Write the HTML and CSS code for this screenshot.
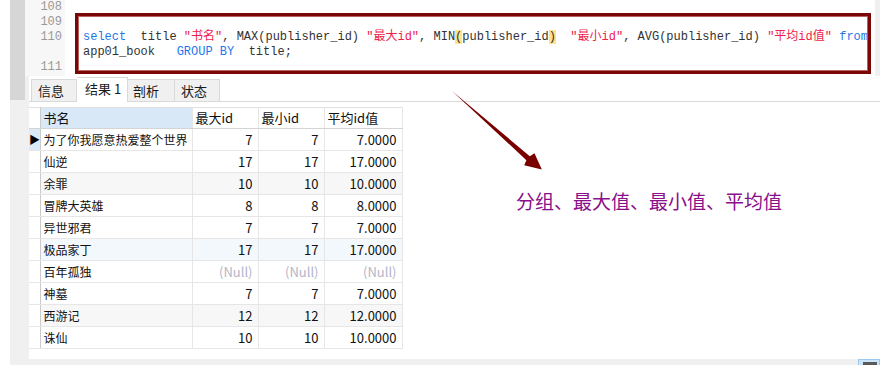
FILE: index.html
```html
<!DOCTYPE html>
<html lang="zh-CN">
<head>
  <meta charset="UTF-8" />
  <title>分组查询</title>
  <link rel="stylesheet" href="styles.css">
</head>
<body>
  <div class="window">
    <div class="top">
      <div class="rail"><div class="rail-grip"></div></div>
      <div class="main">
        <div class="editor">
          <div class="gutter">
            <div class="num">108</div>
            <div class="num">109</div>
            <div class="num tall">110</div>
            <div class="num">111</div>
          </div>
          <div class="code">
            <div class="line"></div>
            <div class="line"></div>
            <div class="line"><span class="kw">select</span>  title <span class="str">"书名"</span>, MAX(publisher_id) <span class="str">"最大id"</span>, MIN<span class="match">(</span>publisher_id<span class="match">)</span>  <span class="str">"最小id"</span>, AVG(publisher_id) <span class="str">"平均id值"</span> <span class="kw">from</span></div>
            <div class="line">app01_book   <span class="kw">GROUP BY</span>  title;</div>
            <div class="line"></div>
          </div>
          <div class="vscroll"></div>
        </div>

        <div class="results">
          <div class="tabs">
            <div class="tab t1">信息</div>
            <div class="tab t2 active">结果 1</div>
            <div class="tab t3">剖析</div>
            <div class="tab t4">状态</div>
          </div>

          <table class="grid">
            <colgroup>
              <col class="c-ind"><col class="c-name"><col class="c-num"><col class="c-num"><col class="c-avg">
            </colgroup>
            <thead>
              <tr>
                <th class="ind"></th>
                <th class="sel">书名</th>
                <th>最大id</th>
                <th>最小id</th>
                <th>平均id值</th>
              </tr>
            </thead>
            <tbody>
              <tr class="current"><td class="ind">▶</td><td class="name">为了你我愿意热爱整个世界</td><td class="n">7</td><td class="n">7</td><td class="n">7.0000</td></tr>
              <tr><td class="ind"></td><td class="name">仙逆</td><td class="n">17</td><td class="n">17</td><td class="n">17.0000</td></tr>
              <tr class="alt"><td class="ind"></td><td class="name">余罪</td><td class="n">10</td><td class="n">10</td><td class="n">10.0000</td></tr>
              <tr><td class="ind"></td><td class="name">冒牌大英雄</td><td class="n">8</td><td class="n">8</td><td class="n">8.0000</td></tr>
              <tr><td class="ind"></td><td class="name">异世邪君</td><td class="n">7</td><td class="n">7</td><td class="n">7.0000</td></tr>
              <tr class="hover"><td class="ind"></td><td class="name">极品家丁</td><td class="n">17</td><td class="n">17</td><td class="n">17.0000</td></tr>
              <tr><td class="ind"></td><td class="name">百年孤独</td><td class="n null">(Null)</td><td class="n null">(Null)</td><td class="n null">(Null)</td></tr>
              <tr><td class="ind"></td><td class="name">神墓</td><td class="n">7</td><td class="n">7</td><td class="n">7.0000</td></tr>
              <tr class="alt"><td class="ind"></td><td class="name">西游记</td><td class="n">12</td><td class="n">12</td><td class="n">12.0000</td></tr>
              <tr><td class="ind"></td><td class="name">诛仙</td><td class="n">10</td><td class="n">10</td><td class="n">10.0000</td></tr>
            </tbody>
          </table>
        </div>
      </div>
    </div>

    <div class="status">
      <span class="status-btn"><i></i></span>
    </div>

    <!-- annotations drawn over the screenshot -->
    <div class="note-box"></div>
    <svg class="arrow" width="880" height="365" viewBox="0 0 880 365">
      <polygon points="452,91 529.8,156.2 534.5,153.2 541.8,169.5 524.2,165.2 526.4,160.2" fill="#7a0000" />
    </svg>
    <div class="note">分组、最大值、最小值、平均值</div>
  </div>
</body>
</html>
```

FILE: styles.css
```css
body {
  margin: 0;
  background: #ffffff;
  font-family: "Noto Sans CJK SC", "Noto Sans", sans-serif;
}
.window {
  position: relative;
  width: 880px;
  height: 365px;
  overflow: hidden;
  display: flex;
  flex-direction: column;
}
.top {
  display: flex;
  height: 359px;
  padding-left: 10px;
}
.rail {
  width: 15px;
  background: #f0f0f0;
}
.rail-grip {
  height: 100px;
  background: #d6d6d6;
}
.main {
  flex: 1;
  display: flex;
  flex-direction: column;
}

/* editor */
.editor {
  display: flex;
  height: 76px;
  background: #ffffff;
}
.gutter {
  width: 40px;
  box-sizing: border-box;
  padding-right: 3px;
  background: #f7f7f7;
  color: #999999;
  font-family: "Liberation Mono", monospace;
  font-size: 12px;
  text-align: right;
}
.num {
  height: 15px;
  line-height: 15px;
}
.num.tall {
  height: 30px;
}
.code {
  flex: 1;
  padding-left: 18px;
  color: #333333;
  font-family: "Liberation Mono", "Noto Sans CJK SC", monospace;
  font-size: 12px;
}
.line {
  height: 15px;
  line-height: 15px;
  white-space: pre;
}
.kw {
  color: #1f78e8;
}
.str {
  color: #f0204c;
}
.match {
  background: #ffe28a;
}
.vscroll {
  width: 5px;
  background: #f0f0f0;
}

/* result pane */
.results {
  flex: 1;
  background: #ffffff;
  border-left: 4px solid #f0f0f0;
}
.tabs {
  height: 26px;
  box-sizing: border-box;
  display: flex;
  align-items: flex-end;
  padding-left: 2px;
  border-bottom: 1px solid #d9d9d9;
}
.tab {
  height: 22px;
  box-sizing: border-box;
  padding-left: 6px;
  border: 1px solid #d9d9d9;
  border-bottom: none;
  border-left: none;
  background: #f0f0f0;
  color: #1a1a1a;
  font-size: 13px;
  line-height: 21px;
}
.tab.t1 {
  width: 46px;
  border-left: 1px solid #d9d9d9;
}
.tab.t2 {
  width: 51px;
  padding-left: 8px;
}
.tab.t3 {
  width: 47px;
  padding-left: 5px;
}
.tab.t4 {
  width: 45px;
  padding-left: 6px;
}
.tab.active {
  height: 25px;
  margin-bottom: -1px;
  background: #ffffff;
  line-height: 22px;
}

.grid {
  margin-top: 5px;
  border-collapse: collapse;
  table-layout: fixed;
  width: 373px;
  font-size: 12px;
  color: #111111;
}
.c-ind { width: 11px; }
.c-name { width: 152px; }
.c-num { width: 66px; }
.c-avg { width: 78px; }
.grid th,
.grid td {
  padding: 0 5px 0 3px;
  border: 1px solid #e6e6e6;
  white-space: nowrap;
  text-align: left;
  font-weight: normal;
}
.grid th {
  height: 20px;
  line-height: 20px;
  border-top-color: #e0e0e0;
  border-bottom-color: #d4d4d4;
  font-size: 13px;
}
.grid td {
  height: 21px;
  line-height: 21px;
}
.grid td.name {
  padding-right: 0;
  font-size: 12px;
}
.grid td.n {
  font-size: 13px;
}
.grid th.sel {
  background: #d9e8f7;
}
.grid .ind {
  padding: 0;
  border-left: none;
  border-right: 1px solid #cbcbcb;
  font-size: 11px;
  color: #000000;
  text-align: center;
}
.grid tr.current .ind {
  background: #dce9f7;
}
.grid tr.alt td {
  background: #f7f7f7;
}
.grid tr.hover td {
  background: #f3f8fd;
}
.grid tr.alt td.ind,
.grid tr.hover td.ind {
  background: #ffffff;
}
.grid td.n {
  text-align: right;
}
.grid td.null {
  color: #b3b6ca;
}

/* status bar */
.status {
  height: 6px;
  margin-left: 10px;
  background: #f0f0f0;
  display: flex;
  justify-content: flex-end;
}
.status-btn {
  width: 22px;
  height: 6px;
  box-sizing: border-box;
  background: #cce4f7;
  border: 1px solid #9bc9ef;
  border-bottom: none;
}
.status-btn i {
  display: block;
  width: 14px;
  height: 3px;
  margin: 2px 0 0 4px;
  background: #5a5a5a;
}

/* annotations */
.note-box {
  position: absolute;
  left: 75px;
  top: 13px;
  width: 796px;
  height: 61px;
  box-sizing: border-box;
  border: 3px solid #7a0606;
  box-shadow: inset 0 0 0 1px #b46262;
}
.arrow {
  position: absolute;
  left: 0;
  top: 0;
}
.note {
  position: absolute;
  left: 516px;
  top: 188px;
  color: #8a0f8a;
  font-size: 19px;
  line-height: 26px;
  white-space: nowrap;
}
```
